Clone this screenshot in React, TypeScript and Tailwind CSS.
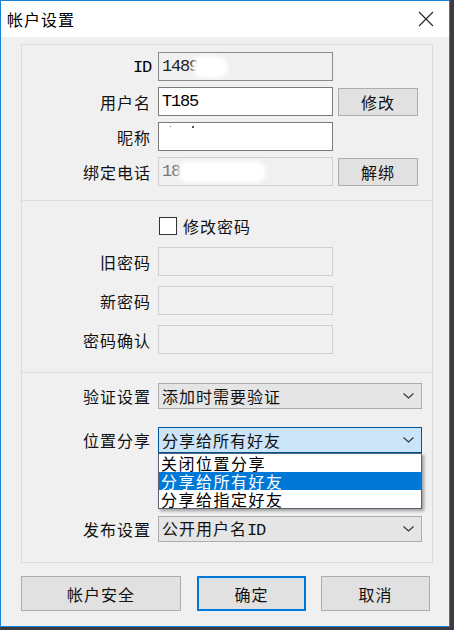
import { ReactNode } from 'react'

const cjk = "font-['Noto_Sans_CJK_SC','Noto_Sans',sans-serif]"
const mono = "font-['Liberation_Mono','Noto_Sans_CJK_SC',monospace] text-[17px] tracking-[-1.2px]"

function Label({ children }: { children: ReactNode }) {
  return (
    <div className="w-[129px] shrink-0 -mr-[1px] text-right text-[16px] leading-none tracking-[1px] text-[#111]">
      {children}
    </div>
  )
}

function Chevron() {
  return (
    <svg width="11" height="6" viewBox="0 0 11 6" className="mr-[7px] shrink-0">
      <polyline points="0.5,0.5 5.5,5 10.5,0.5" fill="none" stroke="#333" strokeWidth="1.1" />
    </svg>
  )
}

function Combo({ text, focused }: { text: ReactNode; focused?: boolean }) {
  return (
    <div
      className={
        focused
          ? 'flex h-[26px] w-[264px] items-center justify-between border border-[#005499] bg-[#cce4f7] pl-[3px]'
          : 'flex h-[26px] w-[264px] items-center justify-between border border-[#adadad] bg-[#e5e5e5] pl-[3px]'
      }
    >
      <span className="text-[16px] leading-none tracking-[1px] text-[#111]">{text}</span>
      <Chevron />
    </div>
  )
}

function WinButton({ children, w, primary }: { children: ReactNode; w: string; primary?: boolean }) {
  return (
    <div
      className={
        primary
          ? `flex h-[35px] ${w} items-center justify-center border-2 border-[#0078d7] bg-[#e1e1e1] text-[16px] leading-none tracking-[1px] text-[#111]`
          : `flex h-[35px] ${w} items-center justify-center border border-[#adadad] bg-[#e1e1e1] text-[16px] leading-none tracking-[1px] text-[#111]`
      }
    >
      {children}
    </div>
  )
}

export default function App() {
  return (
    <div className={`h-[630px] w-[454px] overflow-hidden bg-[#3d3b3f] ${cjk}`}>
      <div className="flex h-[627px] w-[450px] flex-col border border-[#1883d7] bg-[#f0f0f0]">
        {/* Title bar */}
        <div className="flex h-[36px] shrink-0 items-center justify-between bg-white pl-[6px] pr-[15px]">
          <span className="text-[16px] leading-none tracking-[1px] text-black">帐户设置</span>
          <svg width="16" height="16" viewBox="0 0 16 16">
            <path d="M1 1 L15 15 M15 1 L1 15" stroke="#222" strokeWidth="1.1" fill="none" />
          </svg>
        </div>

        {/* Body */}
        <div className="flex flex-col pl-[20px] pt-[7px]">
          <div className="flex w-[412px] flex-col border border-[#dcdcdc]">
            {/* Account */}
            <div className="flex h-[155px] flex-col gap-[6px] pt-[7px]">
              <div className="flex h-[29px] items-center gap-[8px]">
                <Label>
                  <span className={`${mono} text-black`}>ID</span>
                </Label>
                <div className="flex h-[29px] w-[175px] items-center overflow-hidden border border-[#8a8a8a] bg-[#f0f0f0] pl-[3px]">
                  <span className={`${mono} text-[#222]`}>1489</span>
                  <span className="-ml-[6px] inline-block h-[22px] w-[36px] rounded-full bg-white blur-[2px]" />
                </div>
              </div>
              <div className="flex h-[29px] items-center gap-[8px]">
                <Label>用户名</Label>
                <div className="flex h-[29px] w-[175px] items-center border border-[#7a7a7a] bg-white pl-[3px]">
                  <span className={`${mono} text-black`}>T185</span>
                </div>
                <div className="ml-[-3px] flex h-[28px] w-[80px] items-center justify-center border border-[#adadad] bg-[#e1e1e1] text-[16px] leading-none tracking-[1px] text-[#111]">
                  修改
                </div>
              </div>
              <div className="flex h-[29px] items-center gap-[8px]">
                <Label>昵称</Label>
                <div className="flex h-[29px] w-[175px] items-start border border-[#7a7a7a] bg-white pl-[11px] pt-[3px]">
                  <span className="inline-block h-[1px] w-[1px] bg-[#777]" />
                  <span className="ml-[21px] inline-block h-[2px] w-[2px] bg-[#555]" />
                </div>
              </div>
              <div className="flex h-[29px] items-center gap-[8px]">
                <Label>绑定电话</Label>
                <div className="flex h-[29px] w-[175px] items-center overflow-hidden border border-[#cfcfcf] bg-[#f0f0f0] pl-[3px]">
                  <span className={`${mono} text-[#777]`}>18</span>
                  <span className="-ml-[2px] inline-block h-[22px] w-[88px] rounded-full bg-white blur-[2px]" />
                </div>
                <div className="ml-[-3px] flex h-[28px] w-[80px] items-center justify-center border border-[#adadad] bg-[#e1e1e1] text-[16px] leading-none tracking-[1px] text-[#111]">
                  解绑
                </div>
              </div>
            </div>

            {/* Password */}
            <div className="flex h-[172px] flex-col border-t border-[#dcdcdc] pt-[16px]">
              <div className="flex h-[18px] items-center pl-[137px]">
                <div className="h-[18px] w-[18px] border border-[#333] bg-white" />
                <span className="ml-[6px] text-[16px] leading-none tracking-[1px] text-[#111]">修改密码</span>
              </div>
              <div className="mt-[12px] flex flex-col gap-[10px]">
                {['旧密码', '新密码', '密码确认'].map((t) => (
                  <div key={t} className="flex h-[29px] items-center gap-[8px]">
                    <Label>{t}</Label>
                    <div className="h-[29px] w-[175px] border border-[#cfcfcf] bg-[#f0f0f0]" />
                  </div>
                ))}
              </div>
            </div>

            {/* Privacy */}
            <div className="flex h-[190px] flex-col border-t border-[#dcdcdc] pt-[10px]">
              <div className="flex h-[26px] items-center gap-[8px]">
                <Label>验证设置</Label>
                <Combo text="添加时需要验证" />
              </div>
              <div className="mt-[18px] flex h-[26px] items-center gap-[8px]">
                <Label>位置分享</Label>
                <div className="relative">
                  <Combo text="分享给所有好友" focused />
                  <div className="absolute left-0 top-[26px] z-10 flex w-[264px] flex-col border border-[#5a6270] bg-white shadow-[2px_2px_3px_rgba(0,0,0,0.35)]">
                    <div className="flex h-[18px] items-center pl-[2px] text-[16px] leading-none tracking-[1.5px] text-black">关闭位置分享</div>
                    <div className="flex h-[18px] items-center bg-[#0078d7] pl-[2px] text-[16px] leading-none tracking-[1.5px] text-white">分享给所有好友</div>
                    <div className="flex h-[18px] items-center pl-[2px] text-[16px] leading-none tracking-[1.5px] text-black">分享给指定好友</div>
                  </div>
                </div>
              </div>
              <div className="mt-[63px] flex h-[26px] items-center gap-[8px]">
                <Label>发布设置</Label>
                <Combo
                  text={
                    <>
                      公开用户名<span className={mono}>ID</span>
                    </>
                  }
                />
              </div>
            </div>
          </div>

          {/* Buttons */}
          <div className="mt-[13px] flex items-center">
            <WinButton w="w-[160px]">帐户安全</WinButton>
            <div className="ml-[16px]">
              <WinButton w="w-[109px]" primary>
                确定
              </WinButton>
            </div>
            <div className="ml-[15px]">
              <WinButton w="w-[109px]">取消</WinButton>
            </div>
          </div>
        </div>
      </div>
    </div>
  )
}
